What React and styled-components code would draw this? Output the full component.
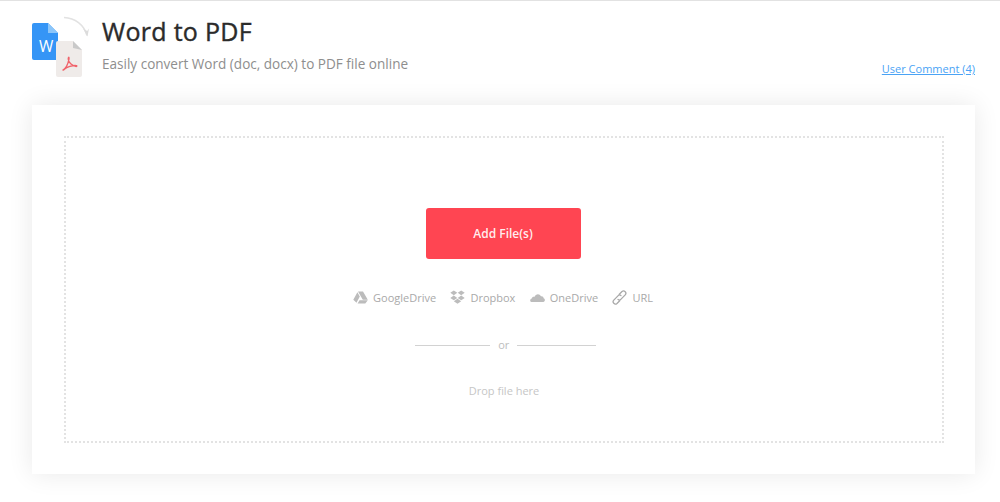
import React from "react";
import styled, { createGlobalStyle } from "styled-components";

const GlobalStyle = createGlobalStyle`
  html, body {
    margin: 0;
    padding: 0;
    background: #fff;
    font-family: "Open Sans", "Liberation Sans", sans-serif;
  }
`;

const Page = styled.div`
  width: 1000px;
  height: 502px;
  overflow: hidden;
  border-top: 1px solid #e2e2e2;
  box-sizing: border-box;
`;

const Header = styled.header`
  height: 104px;
  padding: 0 25px 0 32px;
  display: flex;
  box-sizing: border-box;
`;

const Logo = styled.svg`
  width: 60px;
  height: 66px;
  margin-top: 14px;
  flex: none;
`;

const Heading = styled.div`
  margin-left: 10px;
  flex: 1;
`;

const Title = styled.h1`
  margin: 12px 0 0;
  font-size: 25px;
  line-height: 36px;
  font-weight: 400;
  color: #2b2b2b;
  letter-spacing: 0.3px;
  -webkit-text-stroke: 0.4px #2b2b2b;
`;

const Subtitle = styled.p`
  margin: 5px 0 0;
  font-size: 13.55px;
  line-height: 20px;
  color: #8e8e8e;
`;

const CommentLink = styled.a`
  align-self: flex-start;
  margin-top: 59px;
  font-size: 11px;
  line-height: 18px;
  color: #4aa3f5;
  text-decoration: underline;
`;

const Card = styled.main`
  width: 943px;
  height: 369px;
  margin-left: 32px;
  padding: 31px 31px 31px 32px;
  box-sizing: border-box;
  background: #fff;
  box-shadow: 0 0 24px rgba(0, 0, 0, 0.09);
`;

const DropZone = styled.section`
  height: 307px;
  box-sizing: border-box;
  border: 2px dotted #e3e3e3;
  padding-top: 70px;
  display: flex;
  flex-direction: column;
  align-items: center;
`;

const AddButton = styled.button`
  width: 155px;
  height: 51px;
  margin-right: 2px;
  border: 0;
  border-radius: 3px;
  background: #ff4552;
  color: rgba(255, 255, 255, 0.92);
  font: 600 12px "Open Sans", sans-serif;
`;

const Sources = styled.div`
  margin: 29px 2px 0 0;
  height: 18px;
  display: flex;
  align-items: center;
  gap: 14.3px;
`;

const Source = styled.span`
  display: flex;
  align-items: center;
  gap: 5px;
  font-size: 11px;
  color: #a9a9a9;
`;

const SourceIcon = styled.svg`
  width: 15px;
  height: 15px;
  fill: ${(p) => (p.$outline ? "none" : "#bcbcbc")};
  stroke: ${(p) => (p.$outline ? "#a8a8a8" : "none")};
  stroke-width: 1.3;
  stroke-linecap: round;
`;

const Divider = styled.div`
  margin: 30px 0 0 3px;
  display: flex;
  align-items: center;
  color: #bdbdbd;
  font-size: 11px;
  line-height: 18px;
`;

const Rule = styled.span`
  height: 1px;
  width: ${(p) => p.$width}px;
  background: #d2d2d2;
`;

const Or = styled.span`
  margin: 0 7.5px 0 8px;
`;

const DropHint = styled.div`
  margin-top: 28px;
  font-size: 11px;
  line-height: 18px;
  color: #c6c6c6;
`;

const sources = [
  {
    name: "GoogleDrive",
    icon: <path d="M5 1.500h5l4.800 8.300h-5zM4.400 2.200l2.400 4.300-3.300 6.200L.3 9.800zM6.500 10.300h8.300L12.300 13.500H4.600z" />,
  },
  {
    name: "Dropbox",
    icon: <path d="M3.800 .5 7.300 2.800 3.800 5.200 .3 2.800zM11.200 .5l3.500 2.300-3.500 2.400-3.500-2.400zM3.800 5.600l3.500 2.300-3.500 2.400L.3 7.900zM11.200 5.600l3.500 2.300-3.500 2.400-3.500-2.400zM3.800 11.200l3.700-2.500 3.700 2.500-3.700 2.600z" />,
  },
  {
    name: "OneDrive",
    icon: <path d="M1.300 12c-1.500-.4-1.600-3 .5-3.500.1-1.600 1.700-2.200 2.800-1.700C5.500 3.700 9.600 3 11 6.300c1.800-.2 2.700 1 2.600 2 1.800.5 1.700 3.300-.1 3.700z" />,
  },
  {
    name: "URL",
    outline: true,
    icon: (
      <>
        <path d="M6 9.400c.9.900 2 .8 2.800 0l4.400-4.500c2-2.300-1-5.200-3.200-3.300L7.300 4.300" />
        <path d="M9 5.600c-.9-.9-2-.8-2.800 0L1.800 10.100c-2 2.300 1 5.200 3.200 3.300l2.700-2.700" />
      </>
    ),
  },
];

export default function App() {
  return (
    <>
      <GlobalStyle />
      <Page>
        <Header>
          <Logo viewBox="0 0 60 66">
            <path d="M32 2.500c11 .5 20 7 23 18" fill="none" stroke="#e2e2e2" strokeWidth="1.500" />
            <path d="M51 13.500l4.200 2.500 1.800-2.500-1.500 8z" fill="#dcdcdc" />
            <path d="M2 8h14l10 10v25a2 2 0 0 1-2 2H2a2 2 0 0 1-2-2V10a2 2 0 0 1 2-2z" fill="#3595f6" />
            <path d="M16 8l10 10H16z" fill="#8cc6fa" />
            <text x="7" y="37" fontFamily="Open Sans, sans-serif" fontSize="15.5" fill="#fff">W</text>
            <path d="M26 26h15l9 9v25a2 2 0 0 1-2 2H26a2 2 0 0 1-2-2V28a2 2 0 0 1 2-2z" fill="#efebe9" />
            <path d="M41 26l9 9-9-2z" fill="#c9c9c9" />
            <path d="M31 55c3-1.500 5-6 6-11 .3-2.500-.8-2.500-.8 0 0 3 4 7 8 7.500 1 0 1-1-.5-1-3-.2-9 1.500-11 3.500-1 1-1.500 1.500-1.700 1z" fill="none" stroke="#f0636b" strokeWidth="1.300" />
          </Logo>
          <Heading>
            <Title>Word to PDF</Title>
            <Subtitle>Easily convert Word (doc, docx) to PDF file online</Subtitle>
          </Heading>
          <CommentLink href="#">User Comment (4)</CommentLink>
        </Header>
        <Card>
          <DropZone>
            <AddButton>Add File(s)</AddButton>
            <Sources>
              {sources.map((s) => (
                <Source key={s.name}>
                  <SourceIcon viewBox="0 0 15 15" $outline={s.outline}>{s.icon}</SourceIcon>
                  {s.name}
                </Source>
              ))}
            </Sources>
            <Divider>
              <Rule $width={75} />
              <Or>or</Or>
              <Rule $width={79} />
            </Divider>
            <DropHint>Drop file here</DropHint>
          </DropZone>
        </Card>
      </Page>
    </>
  );
}
